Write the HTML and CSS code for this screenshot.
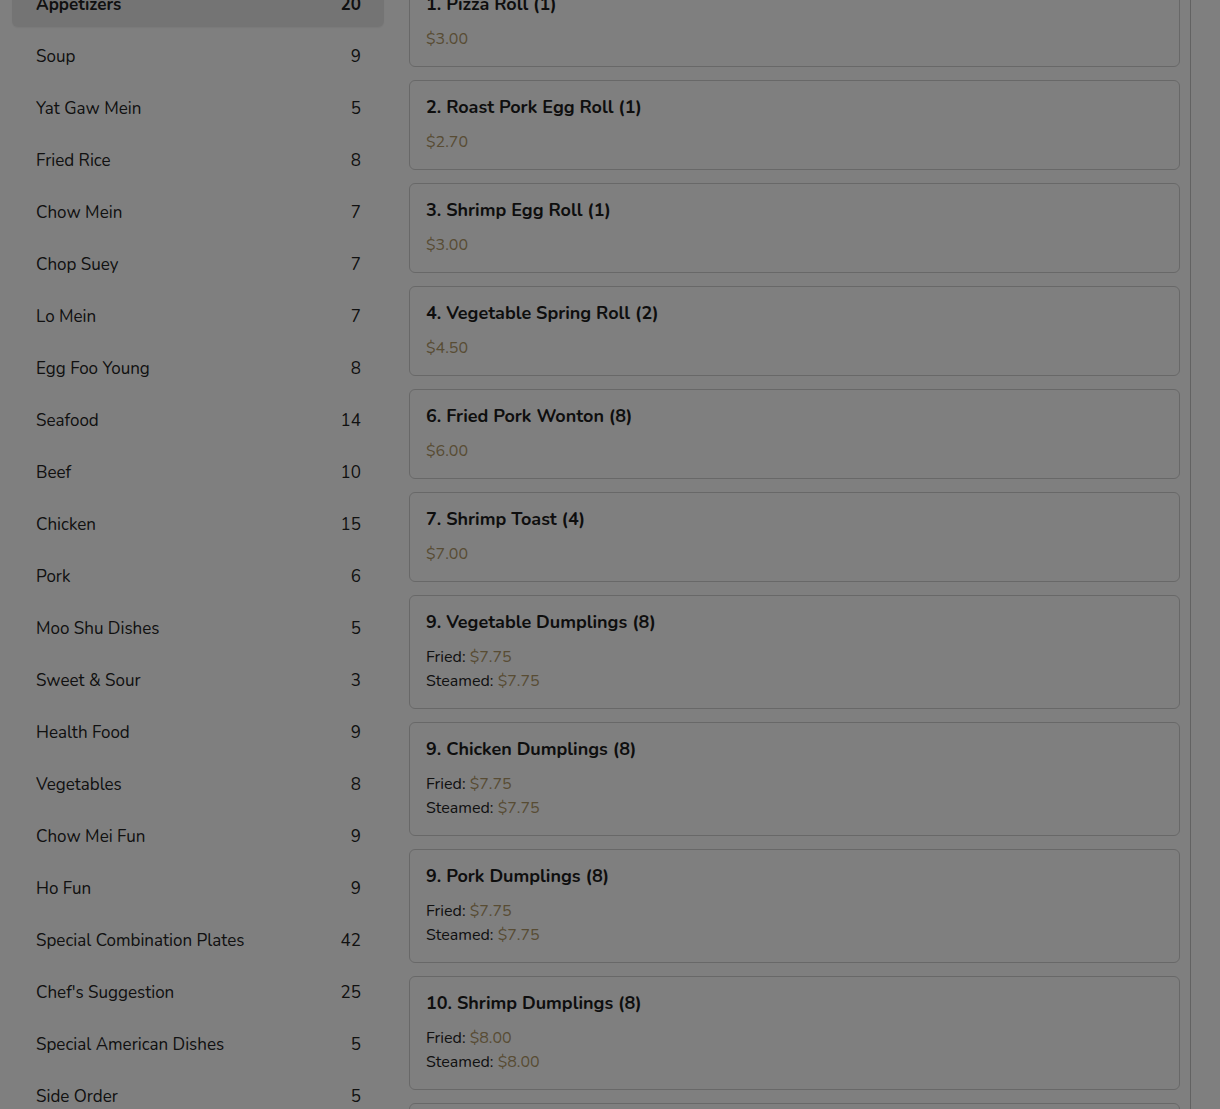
FILE: index.html
```html
<!DOCTYPE html>
<html>
<head>
<meta charset="utf-8">
<link rel="stylesheet" href="styles.css">
</head>
<body>
<div class="page">
  <aside class="cats">
    <div class="cat active"><span>Appetizers</span><span>20</span></div>
    <div class="cat"><span>Soup</span><span>9</span></div>
    <div class="cat"><span>Yat Gaw Mein</span><span>5</span></div>
    <div class="cat"><span>Fried Rice</span><span>8</span></div>
    <div class="cat"><span>Chow Mein</span><span>7</span></div>
    <div class="cat"><span>Chop Suey</span><span>7</span></div>
    <div class="cat"><span>Lo Mein</span><span>7</span></div>
    <div class="cat"><span>Egg Foo Young</span><span>8</span></div>
    <div class="cat"><span>Seafood</span><span>14</span></div>
    <div class="cat"><span>Beef</span><span>10</span></div>
    <div class="cat"><span>Chicken</span><span>15</span></div>
    <div class="cat"><span>Pork</span><span>6</span></div>
    <div class="cat"><span>Moo Shu Dishes</span><span>5</span></div>
    <div class="cat"><span>Sweet &amp; Sour</span><span>3</span></div>
    <div class="cat"><span>Health Food</span><span>9</span></div>
    <div class="cat"><span>Vegetables</span><span>8</span></div>
    <div class="cat"><span>Chow Mei Fun</span><span>9</span></div>
    <div class="cat"><span>Ho Fun</span><span>9</span></div>
    <div class="cat"><span>Special Combination Plates</span><span>42</span></div>
    <div class="cat"><span>Chef's Suggestion</span><span>25</span></div>
    <div class="cat"><span>Special American Dishes</span><span>5</span></div>
    <div class="cat"><span>Side Order</span><span>5</span></div>
  </aside>
  <main class="items">
    <div class="card"><div class="title">1. Pizza Roll (1)</div><div class="price">$3.00</div></div>
    <div class="card"><div class="title">2. Roast Pork Egg Roll (1)</div><div class="price">$2.70</div></div>
    <div class="card"><div class="title">3. Shrimp Egg Roll (1)</div><div class="price">$3.00</div></div>
    <div class="card"><div class="title">4. Vegetable Spring Roll (2)</div><div class="price">$4.50</div></div>
    <div class="card"><div class="title">6. Fried Pork Wonton (8)</div><div class="price">$6.00</div></div>
    <div class="card"><div class="title">7. Shrimp Toast (4)</div><div class="price">$7.00</div></div>
    <div class="card"><div class="title">9. Vegetable Dumplings (8)</div><div class="opt">Fried: <span class="price">$7.75</span></div><div class="opt">Steamed: <span class="price">$7.75</span></div></div>
    <div class="card"><div class="title">9. Chicken Dumplings (8)</div><div class="opt">Fried: <span class="price">$7.75</span></div><div class="opt">Steamed: <span class="price">$7.75</span></div></div>
    <div class="card"><div class="title">9. Pork Dumplings (8)</div><div class="opt">Fried: <span class="price">$7.75</span></div><div class="opt">Steamed: <span class="price">$7.75</span></div></div>
    <div class="card"><div class="title">10. Shrimp Dumplings (8)</div><div class="opt">Fried: <span class="price">$8.00</span></div><div class="opt">Steamed: <span class="price">$8.00</span></div></div>
    <div class="card"><div class="title">11. Fried Shrimp (10)</div><div class="price">$8.50</div></div>
  </main>
  <div class="side"></div>
</div>
<div class="overlay"></div>
</body>
</html>
```

FILE: styles.css
```css
* { box-sizing: border-box; }
html, body { margin: 0; padding: 0; }
body {
  background: #ffffff;
  font-family: Nunito, Lato, "Noto Sans", sans-serif;
  color: #222222;
  overflow: hidden;
}
.page {
  display: flex;
  align-items: flex-start;
  margin-top: -24px;
  padding-left: 12px;
}
.cats {
  width: 372px;
  flex: none;
  padding-top: 5px;
  display: flex;
  flex-direction: column;
  gap: 6px;
}
.cat {
  height: 46px;
  display: flex;
  align-items: center;
  justify-content: space-between;
  padding: 0 23px 0 24px;
  font-size: 17px;
  color: #222222;
  border-radius: 6px;
}
.cat.active {
  background: #e9e9e9;
  font-weight: 700;
  box-shadow: 0 1px 2px rgba(0,0,0,0.06);
}
.items {
  width: 782px;
  flex: none;
  margin-left: 25px;
  margin-top: 1px;
  padding-right: 10px;
  border-right: 1px solid #c4c4c4;
  display: flex;
  flex-direction: column;
  gap: 13px;
  padding-bottom: 40px;
}
.card {
  border: 1px solid #d0d0d0;
  border-radius: 6px;
  padding: 15px 16px;
  background: #ffffff;
}
.title {
  font-size: 18px;
  font-weight: 700;
  line-height: 22px;
  margin-bottom: 12px;
  color: #1c1c1c;
}
.price {
  color: #b09868;
  font-size: 16px;
  line-height: 24px;
}
.opt {
  font-size: 16px;
  line-height: 24px;
  color: #222222;
}
.side {
  flex: 1;
}
.overlay {
  position: fixed;
  inset: 0;
  background: rgba(0,0,0,0.5);
}
```
